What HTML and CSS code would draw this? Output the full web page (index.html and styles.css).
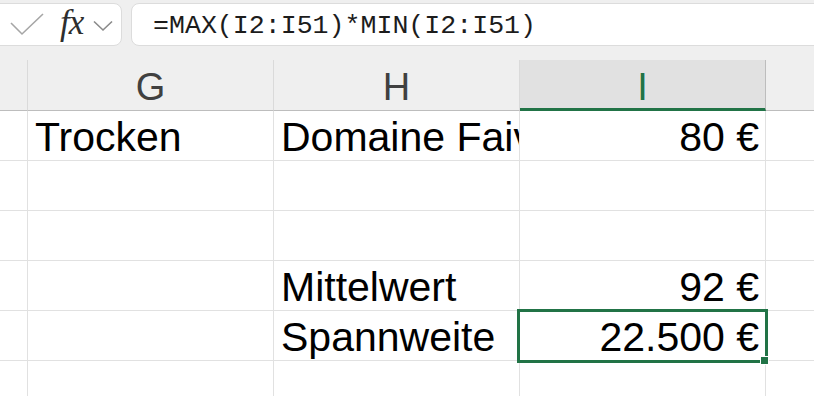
FILE: index.html
```html
<!DOCTYPE html>
<html lang="de">
<head>
<meta charset="utf-8">
<title>Excel</title>
<link rel="stylesheet" href="styles.css">
</head>
<body>
<div class="app">
  <div class="formula-bar">
    <div class="fx-box">
      <svg class="check" width="34" height="24" viewBox="0 0 34 24"><polyline points="1,10 12,21 33,1" fill="none" stroke="#a6a6a6" stroke-width="1.6"/></svg>
      <span class="fx">fx</span>
      <svg class="chev" width="20" height="12" viewBox="0 0 20 12"><polyline points="1,1.5 10,10 19,1.5" fill="none" stroke="#8a8a8a" stroke-width="1.6"/></svg>
    </div>
    <div class="formula">=MAX(I2:I51)*MIN(I2:I51)</div>
  </div>
  <div class="sheet">
    <div class="hd c0"></div>
    <div class="hd">G</div>
    <div class="hd">H</div>
    <div class="hd sel">I</div>
    <div class="hd last"></div>

    <div class="cell c0"></div>
    <div class="cell">Trocken</div>
    <div class="cell">Domaine Faiveley</div>
    <div class="cell num">80 €</div>
    <div class="cell last"></div>

    <div class="cell c0"></div><div class="cell"></div><div class="cell"></div><div class="cell num"></div><div class="cell last"></div>
    <div class="cell c0"></div><div class="cell"></div><div class="cell"></div><div class="cell num"></div><div class="cell last"></div>

    <div class="cell c0"></div>
    <div class="cell"></div>
    <div class="cell">Mittelwert</div>
    <div class="cell num">92 €</div>
    <div class="cell last"></div>

    <div class="cell c0"></div>
    <div class="cell"></div>
    <div class="cell">Spannweite</div>
    <div class="cell num active">22.500 €<span class="handle"></span></div>
    <div class="cell last"></div>

    <div class="cell c0"></div><div class="cell"></div><div class="cell"></div><div class="cell num"></div><div class="cell last"></div>
  </div>
</div>
</body>
</html>
```
FILE: styles.css
```css
html, body {
  margin: 0;
  padding: 0;
  background: #efefef;
  overflow: hidden;
}
.app {
  width: 814px;
  height: 396px;
  overflow: hidden;
  font-family: "Liberation Sans", Arial, sans-serif;
}
.formula-bar {
  height: 60px;
  box-sizing: border-box;
  padding-top: 3px;
  display: flex;
  gap: 9px;
}
.fx-box {
  box-sizing: border-box;
  width: 133px;
  height: 43px;
  margin-left: -11px;
  background: #fff;
  border: 1px solid #dcdcdc;
  border-radius: 8px;
  display: flex;
  align-items: center;
  padding-left: 20px;
}
.check { margin-top: 0; }
.fx {
  font-family: "Liberation Serif", "Times New Roman", serif;
  font-style: italic;
  font-size: 35px;
  color: #2e2e2e;
  margin-left: 16px;
  margin-top: -3px;
  letter-spacing: -1px;
}
.chev { margin-left: 10px; margin-top: 2px; }
.formula {
  flex: 1;
  margin-right: -20px;
  box-sizing: border-box;
  height: 43px;
  background: #fff;
  border: 1px solid #dcdcdc;
  border-radius: 8px;
  padding-left: 21px;
  padding-top: 2px;
  font-family: "Liberation Mono", "Courier New", monospace;
  font-size: 26.6px;
  line-height: 41px;
  color: #1c1c1c;
}
.sheet {
  display: grid;
  grid-template-columns: 28px 246px 246px 246px 60px;
  grid-template-rows: 51px repeat(5, 50px) 40px;
}
.hd {
  box-sizing: border-box;
  background: #efefef;
  border-right: 1px solid #dadada;
  border-bottom: 1px solid #bdbdbd;
  display: flex;
  align-items: center;
  justify-content: center;
  font-size: 38px;
  color: #404040;
  padding-top: 4px;
}
.hd.sel {
  background: #e1e1e1;
  color: #217346;
  border-right-color: #bdbdbd;
  border-bottom: 3px solid #217346;
  padding-top: 6px;
}
.hd.last { border-right: none; }
.cell {
  box-sizing: border-box;
  background: #fff;
  border-right: 1px solid #e1e1e1;
  border-bottom: 1px solid #e1e1e1;
  display: flex;
  align-items: flex-end;
  padding: 0 6px 0 7px;
  font-size: 41px;
  line-height: 46px;
  color: #000;
  white-space: nowrap;
  overflow: hidden;
  position: relative;
}
.cell.num { justify-content: flex-end; padding-right: 6px; }
.cell.last { border-right: none; }
.cell.active { overflow: visible; z-index: 2; }
.cell.active::after {
  content: "";
  position: absolute;
  left: -3px;
  top: -2px;
  width: 251px;
  height: 54px;
  box-sizing: border-box;
  border: 3px solid #217346;
}
.handle {
  position: absolute;
  left: 240px;
  top: 45px;
  width: 9px;
  height: 9px;
  box-sizing: border-box;
  background: #217346;
  border: 1px solid #fff;
  z-index: 3;
}
```
